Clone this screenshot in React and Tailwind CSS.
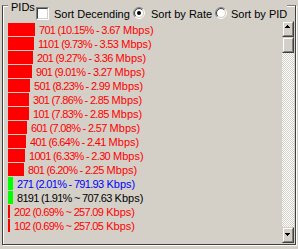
import React from "react";

const rows = [
  { pid: "701", pct: "10.15", sep: "-", rate: "3.67", unit: "Mbps", w: 27, bar: "bg-[#ff0000]", text: "text-[#ff0000]" },
  { pid: "1101", pct: "9.73", sep: "-", rate: "3.53", unit: "Mbps", w: 26, bar: "bg-[#ff0000]", text: "text-[#ff0000]" },
  { pid: "201", pct: "9.27", sep: "-", rate: "3.36", unit: "Mbps", w: 25, bar: "bg-[#ff0000]", text: "text-[#ff0000]" },
  { pid: "901", pct: "9.01", sep: "-", rate: "3.27", unit: "Mbps", w: 24, bar: "bg-[#ff0000]", text: "text-[#ff0000]" },
  { pid: "501", pct: "8.23", sep: "-", rate: "2.99", unit: "Mbps", w: 22, bar: "bg-[#ff0000]", text: "text-[#ff0000]" },
  { pid: "301", pct: "7.86", sep: "-", rate: "2.85", unit: "Mbps", w: 21, bar: "bg-[#ff0000]", text: "text-[#ff0000]" },
  { pid: "101", pct: "7.83", sep: "-", rate: "2.85", unit: "Mbps", w: 21, bar: "bg-[#ff0000]", text: "text-[#ff0000]" },
  { pid: "601", pct: "7.08", sep: "-", rate: "2.57", unit: "Mbps", w: 19, bar: "bg-[#ff0000]", text: "text-[#ff0000]" },
  { pid: "401", pct: "6.64", sep: "-", rate: "2.41", unit: "Mbps", w: 18, bar: "bg-[#ff0000]", text: "text-[#ff0000]" },
  { pid: "1001", pct: "6.33", sep: "-", rate: "2.30", unit: "Mbps", w: 17, bar: "bg-[#ff0000]", text: "text-[#ff0000]" },
  { pid: "801", pct: "6.20", sep: "-", rate: "2.25", unit: "Mbps", w: 16, bar: "bg-[#ff0000]", text: "text-[#ff0000]" },
  { pid: "271", pct: "2.01", sep: "-", rate: "791.93", unit: "Kbps", w: 5, bar: "bg-[#00ff00]", text: "text-[#0000ff]" },
  { pid: "8191", pct: "1.91", sep: "~", rate: "707.63", unit: "Kbps", w: 5, bar: "bg-[#00ff00]", text: "text-black" },
  { pid: "202", pct: "0.69", sep: "~", rate: "257.09", unit: "Kbps", w: 2, bar: "bg-[#ff0000]", text: "text-[#ff0000]" },
  { pid: "102", pct: "0.69", sep: "~", rate: "257.05", unit: "Kbps", w: 2, bar: "bg-[#ff0000]", text: "text-[#ff0000]" },
];

function Radio({ checked }) {
  const arc = (r) => {
    const c = 6;
    const d = r * 0.7071;
    return {
      tl: `M ${c - d} ${c + d} A ${r} ${r} 0 0 1 ${c + d} ${c - d}`,
      br: `M ${c + d} ${c - d} A ${r} ${r} 0 0 1 ${c - d} ${c + d}`,
    };
  };
  const o = arc(5.5);
  const i = arc(4.5);
  return (
    <svg width="12" height="12" viewBox="0 0 12 12" className="shrink-0">
      <circle cx="6" cy="6" r="4.5" fill="#ffffff" />
      <path d={o.tl} stroke="#808080" strokeWidth="1" fill="none" />
      <path d={o.br} stroke="#ffffff" strokeWidth="1" fill="none" />
      <path d={i.tl} stroke="#404040" strokeWidth="1" fill="none" />
      <path d={i.br} stroke="#d4d0c8" strokeWidth="1" fill="none" />
      {checked && <circle cx="6" cy="6" r="2" fill="#000000" />}
    </svg>
  );
}

function ScrollBtn({ children, className = "" }) {
  return (
    <div className="h-[16px] w-[12px] border border-t-[#d4d0c8] border-l-[#d4d0c8] border-b-[#404040] border-r-[#404040]">
      <div className={`h-full w-full border border-t-white border-l-white border-b-[#808080] border-r-[#808080] bg-[#d4d0c8] flex ${className}`}>
        {children}
      </div>
    </div>
  );
}

function Arrow({ up }) {
  return (
    <svg width="5" height="3" viewBox="0 0 5 3" shapeRendering="crispEdges">
      {up ? (
        <>
          <rect x="2" y="0" width="1" height="1" fill="#000" />
          <rect x="1" y="1" width="3" height="1" fill="#000" />
          <rect x="0" y="2" width="5" height="1" fill="#000" />
        </>
      ) : (
        <>
          <rect x="0" y="0" width="5" height="1" fill="#000" />
          <rect x="1" y="1" width="3" height="1" fill="#000" />
          <rect x="2" y="2" width="1" height="1" fill="#000" />
        </>
      )}
    </svg>
  );
}

export default function App() {
  return (
    <div className="relative w-[298px] h-[249px] overflow-hidden bg-[#d4d0c8] pt-[5px] pl-[2px] font-['Liberation_Sans',Arial,sans-serif] text-[11px] text-black">
      <div className="w-[294px] h-[240px] border border-t-[#808080] border-l-[#404040] border-r-[#404040] border-b-[#404040] shadow-[1px_1px_0_#ffffff,inset_1px_1px_0_#ffffff] pt-[15px] pl-[5px] pr-[1px] pb-[1px] flex">
        <div className="flex-1 pt-[2px] flex flex-col">
          {rows.map((r) => (
            <div key={r.pid} className="flex items-start h-[14px]">
              <div className={`h-[13px] shrink-0 ${r.bar}`} style={{ width: r.w }} />
              <div className={`ml-[4px] leading-[14px] whitespace-nowrap ${r.text}`}>
                <span className="tracking-[-0.7px]">{`${r.pid} (${r.pct}% ${r.sep} ${r.rate}`}</span>
                <span>{` ${r.unit})`}</span>
              </div>
            </div>
          ))}
        </div>
        <div className="w-[12px] flex flex-col">
          <ScrollBtn className="pl-[1px] pt-[2px]">
            <Arrow up />
          </ScrollBtn>
          <ScrollBtn />
          <div className="flex-1 bg-[repeating-conic-gradient(#d4d0c8_0_25%,#ffffff_0_50%)] bg-[length:2px_2px]" />
          <ScrollBtn className="pl-[1px] pt-[4px]">
            <Arrow />
          </ScrollBtn>
        </div>
      </div>

      <div className="absolute left-[8px] top-0 px-[3px] pt-[1px] leading-[13px] bg-[#d4d0c8]">PIDs</div>

      <div className="absolute left-[36px] top-0 h-[21px] pt-[7px] flex items-start bg-[#d4d0c8]">
        <div className="w-[97px] flex items-start">
          <div className="w-[13px] h-[13px] shrink-0 border border-t-[#808080] border-l-[#808080] border-b-white border-r-white">
            <div className="w-full h-full bg-white border border-t-[#404040] border-l-[#404040] border-b-[#d4d0c8] border-r-[#d4d0c8]" />
          </div>
          <span className="ml-[5px] mt-[1px] leading-[13px] whitespace-nowrap">Sort Decending</span>
        </div>
        <div className="w-[82px] flex items-start">
          <Radio checked />
          <span className="ml-[6px] mt-[1px] leading-[13px] whitespace-nowrap">Sort by Rate</span>
        </div>
        <div className="w-[72px] flex items-start">
          <Radio />
          <span className="ml-[4px] mt-[1px] leading-[13px] whitespace-nowrap">Sort by PID</span>
        </div>
      </div>
    </div>
  );
}
